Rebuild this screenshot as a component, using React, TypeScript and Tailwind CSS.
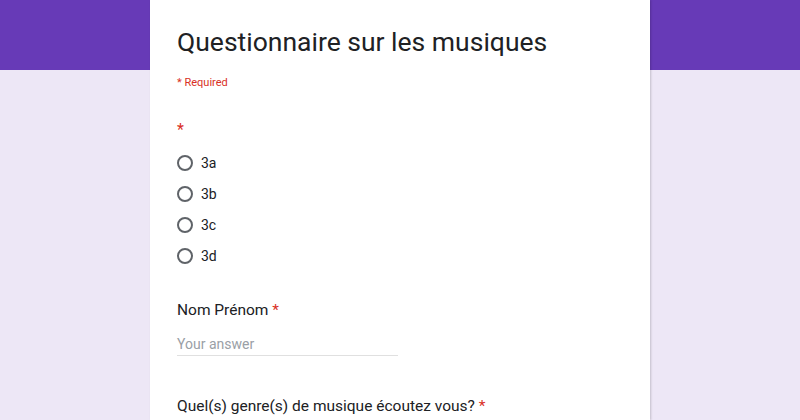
export default function App() {
  const options = ["3a", "3b", "3c", "3d"];
  return (
    <div className="relative w-[800px] h-[420px] overflow-hidden bg-[#ede7f6]" style={{ fontFamily: "Roboto, 'Liberation Sans', sans-serif" }}>
      <div className="absolute inset-x-0 top-0 h-[70px] bg-[#673ab7]" />
      <div className="relative mx-auto w-[500px] h-[420px] bg-white shadow-[1px_0_2px_rgba(0,0,0,0.18)] px-[27px] pt-[22px]">
        <h1 className="text-[26.5px] leading-[40px] text-[#202124]">Questionnaire sur les musiques</h1>
        <div className="mt-[13px] text-[11px] leading-[16px] text-[#d93025]">* Required</div>

        <div className="mt-[27px] text-[16px] leading-[24px] text-[#d93025]">*</div>
        <div className="mt-[11px] flex flex-col gap-[11px]">
          {options.map((o) => (
            <div key={o} className="flex items-center h-[20px]">
              <span className="w-[16px] h-[16px] rounded-full border-2 border-[#5f6368]" />
              <span className="ml-[8px] text-[14px] text-[#202124]">{o}</span>
            </div>
          ))}
        </div>

        <div className="mt-[32px] text-[15.5px] leading-[24px] text-[#202124]">
          Nom Prénom <span className="text-[#d93025]">*</span>
        </div>
        <div className="mt-[12px] w-[221px] border-b border-[#e0e0e0] pb-[1px] text-[14px] leading-[20px] text-[#9aa0a6]">Your answer</div>

        <div className="mt-[38px] text-[15.5px] leading-[24px] text-[#202124]">
          Quel(s) genre(s) de musique écoutez vous? <span className="text-[#d93025]">*</span>
        </div>
      </div>
    </div>
  );
}
